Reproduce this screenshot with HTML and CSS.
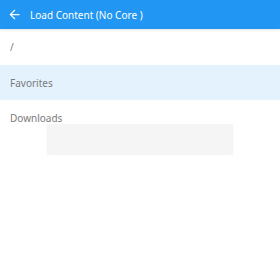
FILE: index.html
```html
<!DOCTYPE html>
<html lang="en">
<head>
    <meta charset="UTF-8">
    <meta name="viewport" content="width=device-width, initial-scale=1.0">
    <title>Load Content</title>
    <link rel="stylesheet" href="styles.css">
</head>
<body>
    <header class="toolbar">
        <svg class="back-icon" viewBox="0 0 24 24" width="15" height="15">
            <path d="M20 11H7.83l5.59-5.59L12 4l-8 8 8 8 1.41-1.41L7.83 13H20v-2z" fill="#fff"/>
        </svg>
        <span class="title">Load Content (No Core )</span>
    </header>

    <ul class="list">
        <li class="item">/</li>
        <li class="item selected">Favorites</li>
        <li class="item">Downloads</li>
    </ul>

    <div class="toast"></div>
</body>
</html>
```

FILE: styles.css
```css
body {
    font-family: "Noto Sans", sans-serif;
    margin: 0;
    padding: 0;
    width: 280px;
    height: 280px;
    background-color: #fff;
    position: relative;
    overflow: hidden;
}
.toolbar {
    height: 29px;
    background-color: #2196f3;
    display: flex;
    align-items: center;
    padding: 0 0 0 7px;
    box-shadow: 0 1px 2px rgba(0, 0, 0, 0.12);
}
.back-icon {
    margin-right: 8px;
}
.title {
    color: #fff;
    font-size: 10px;
}
.list {
    list-style: none;
    margin: 0;
    padding: 0;
}
.item {
    height: 35px;
    display: flex;
    align-items: center;
    padding-left: 10px;
    font-size: 10px;
    color: #7a7a7a;
}
.item:first-child {
    height: 36px;
}
.item.selected {
    background-color: #e3f2fd;
}
.toast {
    position: absolute;
    left: 47px;
    top: 124px;
    width: 186px;
    height: 30px;
    background-color: #f5f5f5;
    box-shadow: 0 1px 2px rgba(0, 0, 0, 0.05);
}
```
